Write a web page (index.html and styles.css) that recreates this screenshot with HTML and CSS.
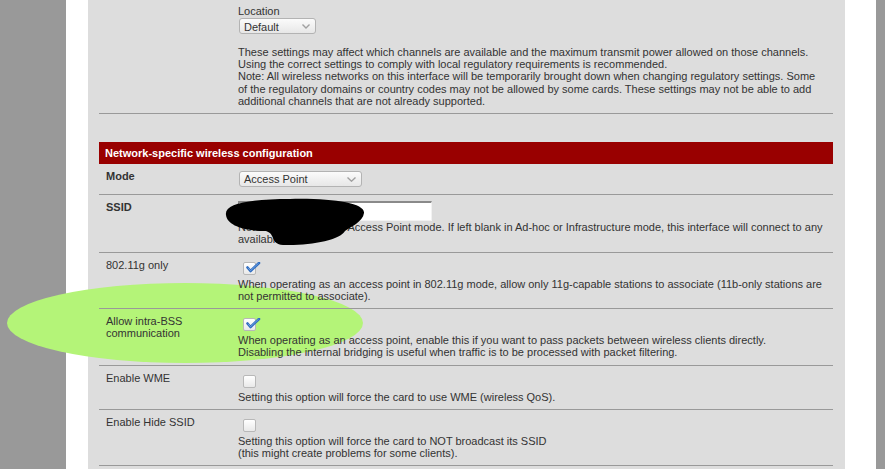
FILE: index.html
```html
<!DOCTYPE html>
<html>
<head>
<meta charset="utf-8">
<link rel="stylesheet" href="styles.css">
</head>
<body>
<div class="page">
  <div class="content">
    <div class="form">
      <div class="row row-top">
        <div class="label"></div>
        <div class="value">
          <div class="line">Location</div>
          <div class="select select-default"><span>Default</span><svg class="chev" width="8" height="5" viewBox="0 0 8 5"><path d="M0.5 0.5 L4 4 L7.5 0.5" fill="none" stroke="#a0a0a0" stroke-width="1.4"/></svg></div>
          <div class="desc gap">These settings may affect which channels are available and the maximum transmit power allowed on those channels.<br>Using the correct settings to comply with local regulatory requirements is recommended.<br>Note: All wireless networks on this interface will be temporarily brought down when changing regulatory settings. Some<br>of the regulatory domains or country codes may not be allowed by some cards. These settings may not be able to add<br>additional channels that are not already supported.</div>
        </div>
      </div>

      <div class="section-head">Network-specific wireless configuration</div>

      <div class="row">
        <div class="label bold">Mode</div>
        <div class="value">
          <div class="select select-mode"><span>Access Point</span><svg class="chev" width="9" height="5" viewBox="0 0 9 5"><path d="M0.5 0.5 L4.5 4.2 L8.5 0.5" fill="none" stroke="#a0a0a0" stroke-width="1.4"/></svg></div>
        </div>
      </div>

      <div class="row">
        <div class="label bold">SSID</div>
        <div class="value">
          <div class="text-input"></div>
          <div class="desc">Note: Only required in Access Point mode. If left blank in Ad-hoc or Infrastructure mode, this interface will connect to any<br>available SSID</div>
        </div>
      </div>

      <div class="row">
        <div class="label">802.11g only</div>
        <div class="value">
          <div class="cb-wrap"><div class="cb"><svg class="tick" width="16" height="12" viewBox="0 0 16 12"><path d="M2.5 5.5 L5.5 9 L14 1" fill="none" stroke="#2f6cc0" stroke-width="2.6" stroke-linecap="round" stroke-linejoin="round"/><path d="M3 5.8 L5.5 8.6 L13.6 1.2" fill="none" stroke="#7eaee8" stroke-width="0.8"/></svg></div></div>
          <div class="desc">When operating as an access point in 802.11g mode, allow only 11g-capable stations to associate (11b-only stations are<br>not permitted to associate).</div>
        </div>
      </div>

      <div class="row">
        <div class="label">Allow intra-BSS<br>communication</div>
        <div class="value">
          <div class="cb-wrap"><div class="cb"><svg class="tick" width="16" height="12" viewBox="0 0 16 12"><path d="M2.5 5.5 L5.5 9 L14 1" fill="none" stroke="#2f6cc0" stroke-width="2.6" stroke-linecap="round" stroke-linejoin="round"/><path d="M3 5.8 L5.5 8.6 L13.6 1.2" fill="none" stroke="#7eaee8" stroke-width="0.8"/></svg></div></div>
          <div class="desc">When operating as an access point, enable this if you want to pass packets between wireless clients directly.<br>Disabling the internal bridging is useful when traffic is to be processed with packet filtering.</div>
        </div>
      </div>

      <div class="row">
        <div class="label">Enable WME</div>
        <div class="value">
          <div class="cb-wrap"><div class="cb"></div></div>
          <div class="desc">Setting this option will force the card to use WME (wireless QoS).</div>
        </div>
      </div>

      <div class="row">
        <div class="label">Enable Hide SSID</div>
        <div class="value">
          <div class="cb-wrap"><div class="cb"></div></div>
          <div class="desc">Setting this option will force the card to NOT broadcast its SSID<br>(this might create problems for some clients).</div>
        </div>
      </div>
    </div>
  </div>
</div>
<div class="highlight"></div>
<svg class="redact" width="160" height="60" viewBox="220 190 160 60"><path d="M226 215 C224 204 248 199 290 199 C332 198 365 203 364 213 C363 222 350 227 345 231 C340 240 310 246 283 245 C270 244 276 234 266 231 C243 231 227 225 226 215 Z" fill="#000"/></svg>
</body>
</html>
```
FILE: styles.css
```css
html, body {
  margin: 0;
  padding: 0;
}
body {
  position: relative;
  width: 885px;
  height: 469px;
  overflow: hidden;
  background: #999999;
  font-family: "Liberation Sans", Arial, sans-serif;
  font-size: 11px;
  line-height: 12.25px;
  color: #333333;
}
.page {
  margin-left: 66px;
  width: 810px;
  height: 469px;
  box-sizing: border-box;
  padding: 0 31px 0 22px;
  background: #ffffff;
}
.content {
  height: 100%;
  box-sizing: border-box;
  padding: 0 12px 0 11px;
  background: #dddddd;
}
.form {
  position: relative;
  z-index: 1;
}
.row {
  display: grid;
  grid-template-columns: 139px 1fr;
  padding: 6px 0;
  border-bottom: 1px solid #999999;
}
.row-top {
  padding-top: 5px;
  padding-bottom: 6px;
}
.label {
  padding-left: 7px;
}
.bold {
  font-weight: bold;
}
.desc {
  white-space: nowrap;
}
.gap {
  margin-top: 11.5px;
}
.section-head {
  margin-top: 28px;
  height: 22px;
  line-height: 22px;
  padding-left: 6px;
  background: #990000;
  color: #ffffff;
  font-weight: bold;
}
.select {
  display: flex;
  align-items: center;
  justify-content: space-between;
  box-sizing: border-box;
  height: 16px;
  margin: 1px 0 1px 1px;
  padding: 0 5px 0 4px;
  border: 1px solid #b3b3b3;
  border-radius: 3px;
  background: linear-gradient(#fbfbfb, #e7e7e7);
  color: #333333;
}
.select span {
  padding-top: 1px;
}
.select-default {
  width: 77px;
}
.select-mode {
  width: 123px;
}
.text-input {
  box-sizing: border-box;
  width: 194px;
  height: 20px;
  background: #ffffff;
  border-top: 2px solid #8a8a8a;
  border-left: 1px solid #8a8a8a;
  border-right: 1px solid #f2f2f2;
  border-bottom: 1px solid #f2f2f2;
}
.cb-wrap {
  box-sizing: border-box;
  height: 19px;
  padding-top: 3px;
}
.cb {
  position: relative;
  box-sizing: border-box;
  width: 13px;
  height: 13px;
  margin-left: 5px;
  border: 1px solid #b8b8b8;
  border-radius: 2px;
  background: linear-gradient(#ffffff, #e9e9e9);
}
.tick {
  position: absolute;
  left: 1px;
  top: -1px;
}
.highlight {
  position: absolute;
  left: 7px;
  top: 283px;
  width: 356px;
  height: 80px;
  border-radius: 50%;
  background: #b4f478;
  z-index: 0;
}
.redact {
  position: absolute;
  left: 220px;
  top: 190px;
  z-index: 2;
}
```
